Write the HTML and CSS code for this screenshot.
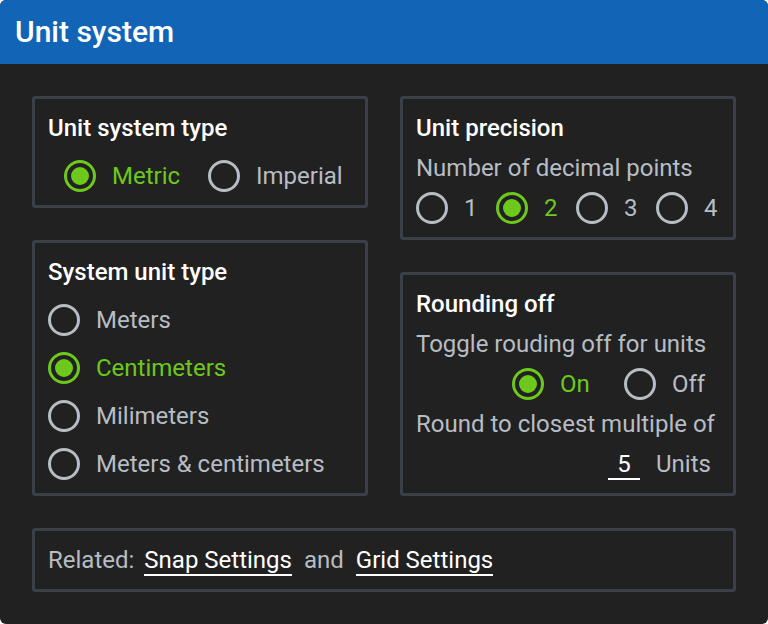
FILE: index.html
```html
<!DOCTYPE html>
<html lang="en">
<head>
<meta charset="utf-8">
<title>Unit system</title>
<link rel="stylesheet" href="styles.css">
</head>
<body>
<div class="window">
  <header class="titlebar">Unit system</header>
  <main class="content">
    <div class="columns">
      <div class="column">
        <section class="box">
          <h2 class="box-title">Unit system type</h2>
          <div class="radio-row row-system">
            <label class="radio checked"><span class="dot"></span><span class="label">Metric</span></label>
            <label class="radio"><span class="dot"></span><span class="label">Imperial</span></label>
          </div>
        </section>
        <section class="box">
          <h2 class="box-title">System unit type</h2>
          <div class="radio-list">
            <label class="radio"><span class="dot"></span><span class="label">Meters</span></label>
            <label class="radio checked"><span class="dot"></span><span class="label">Centimeters</span></label>
            <label class="radio"><span class="dot"></span><span class="label">Milimeters</span></label>
            <label class="radio"><span class="dot"></span><span class="label">Meters &amp; centimeters</span></label>
          </div>
        </section>
      </div>
      <div class="column">
        <section class="box box-tight">
          <h2 class="box-title">Unit precision</h2>
          <p class="box-text">Number of decimal points</p>
          <div class="radio-row row-precision">
            <label class="radio"><span class="dot"></span><span class="label">1</span></label>
            <label class="radio checked"><span class="dot"></span><span class="label">2</span></label>
            <label class="radio"><span class="dot"></span><span class="label">3</span></label>
            <label class="radio"><span class="dot"></span><span class="label">4</span></label>
          </div>
        </section>
        <section class="box box-tight">
          <h2 class="box-title">Rounding off</h2>
          <p class="box-text">Toggle rouding off for units</p>
          <div class="radio-row row-toggle">
            <label class="radio checked"><span class="dot"></span><span class="label">On</span></label>
            <label class="radio"><span class="dot"></span><span class="label">Off</span></label>
          </div>
          <p class="box-text">Round to closest multiple of</p>
          <div class="multiple-row">
            <span class="number-field">5</span>
            <span class="box-text">Units</span>
          </div>
        </section>
      </div>
    </div>
    <section class="box related">
      <span class="muted">Related:</span>
      <a class="link" href="#">Snap Settings</a>
      <span class="muted joiner">and</span>
      <a class="link" href="#">Grid Settings</a>
    </section>
  </main>
</div>
</body>
</html>
```
FILE: styles.css
```css
* {
  box-sizing: border-box;
}

html, body {
  margin: 0;
  padding: 0;
  background: #ffffff;
}

body {
  font-family: Roboto, "Noto Sans", "Liberation Sans", sans-serif;
}

.window {
  width: 768px;
  height: 624px;
  border-radius: 6px;
  overflow: hidden;
  background: #212121;
  display: flex;
  flex-direction: column;
}

.titlebar {
  height: 64px;
  line-height: 64px;
  padding-left: 15px;
  background: #1264b6;
  color: #ffffff;
  font-size: 30px;
  font-weight: 500;
}

.content {
  padding: 32px;
  display: flex;
  flex-direction: column;
  gap: 32px;
}

.columns {
  display: flex;
  gap: 32px;
  align-items: flex-start;
}

.column {
  width: 336px;
  display: flex;
  flex-direction: column;
  gap: 32px;
}

.box {
  border: 3px solid #394047;
  border-radius: 3px;
  padding: 13px;
  display: flex;
  flex-direction: column;
  gap: 16px;
}

.box-tight {
  gap: 8px;
}

.box-title {
  margin: 0;
  font-size: 24px;
  line-height: 32px;
  font-weight: 500;
  color: #ffffff;
}

.box-text {
  margin: 0;
  font-size: 24px;
  line-height: 32px;
  color: #b7bdc4;
}

.radio {
  display: flex;
  align-items: center;
  gap: 16px;
  height: 32px;
  font-size: 24px;
  line-height: 32px;
  color: #b7bdc4;
}

.dot {
  position: relative;
  flex: none;
  width: 32px;
  height: 32px;
  border: 3.5px solid #b7bdc4;
  border-radius: 50%;
}

.radio.checked {
  color: #6cc91c;
}

.radio.checked .dot {
  border-color: #6cc91c;
}

.radio.checked .dot::after {
  content: "";
  position: absolute;
  left: 3.5px;
  top: 3.5px;
  width: 18px;
  height: 18px;
  border-radius: 50%;
  background: #6cc91c;
}

.radio-row {
  display: grid;
}

.row-system {
  grid-template-columns: 144px auto;
  padding-left: 16px;
}

.row-precision {
  grid-template-columns: repeat(4, 80px);
}

.row-toggle {
  grid-template-columns: 112px auto;
  padding-left: 96px;
}

.radio-list {
  display: flex;
  flex-direction: column;
  gap: 16px;
}

.multiple-row {
  display: flex;
  align-items: center;
  gap: 16px;
  padding-left: 192px;
}

.number-field {
  width: 32px;
  height: 32px;
  font-size: 24px;
  line-height: 32px;
  text-align: center;
  color: #ffffff;
  border-bottom: 2px solid #ffffff;
}

.related {
  flex-direction: row;
  align-items: center;
  gap: 10px;
  font-size: 24px;
  line-height: 32px;
}

.muted {
  color: #b7bdc4;
}

.joiner {
  margin: 0 2px;
}

.link {
  color: #ffffff;
  text-decoration: none;
  height: 32px;
  border-bottom: 2px solid #ffffff;
}
```
